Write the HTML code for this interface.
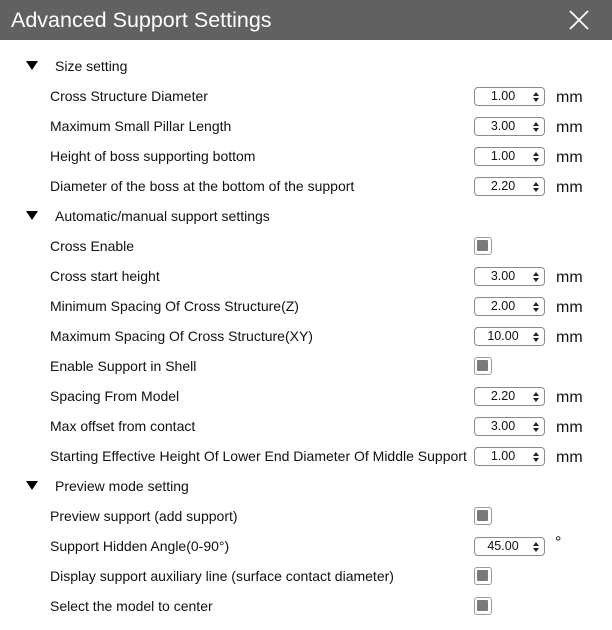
<!DOCTYPE html>
<html><head><meta charset="utf-8"><style>
*{margin:0;padding:0;box-sizing:border-box}
body{width:612px;height:630px;background:#fff;font-family:"Liberation Sans","Noto Sans CJK SC",sans-serif;position:relative;overflow:hidden;color:#111}
.tb{position:absolute;left:0;top:0;width:612px;height:40px;background:#616161;color:#fff;font-size:21.5px;line-height:40px;padding-left:11px}
.x{position:absolute;right:22px;top:9px}
.r{position:absolute;left:0;width:612px;height:30px;font-size:14px;line-height:30px}
.l{position:absolute;left:50px;top:0}
.h .l{left:55px}
.tri{position:absolute;left:26px;top:10px;width:0;height:0;border-left:6px solid transparent;border-right:6px solid transparent;border-top:9px solid #000}
.sp{position:absolute;left:474px;top:6px;width:71px;height:19px;border:1px solid #8a8a8a;border-radius:4px;font-size:12.5px;line-height:17px}
.sp .v{position:absolute;left:0;width:56px;text-align:center}
.sp .a{position:absolute;right:5px;top:4px;width:0;height:0;border-left:3px solid transparent;border-right:3px solid transparent;border-bottom:4px solid #222}
.sp .b{position:absolute;right:5px;top:10px;width:0;height:0;border-left:3px solid transparent;border-right:3px solid transparent;border-top:4px solid #222}
.u{position:absolute;left:556px;top:2px;font-size:16px}
.cb{position:absolute;left:474px;top:6px;width:18px;height:18px;border:1.5px solid #9a9a9a;border-radius:3px}
.cb:after{content:"";position:absolute;left:2px;top:2px;width:11px;height:11px;background:#7a7a7a;border-radius:1px}
</style></head><body>
<div class="tb">Advanced Support Settings<svg class="x" width="22" height="22" viewBox="0 0 22 22"><path d="M2 2L20 20M20 2L2 20" stroke="#fff" stroke-width="1.8"/></svg></div>

<div class="r h" style="top:51px"><div class="tri"></div><span class="l">Size setting</span></div>
<div class="r" style="top:81px"><span class="l">Cross Structure Diameter</span><div class="sp"><span class="v">1.00</span><i class="a"></i><i class="b"></i></div><span class="u">mm</span></div>
<div class="r" style="top:111px"><span class="l">Maximum Small Pillar Length</span><div class="sp"><span class="v">3.00</span><i class="a"></i><i class="b"></i></div><span class="u">mm</span></div>
<div class="r" style="top:141px"><span class="l">Height of boss supporting bottom</span><div class="sp"><span class="v">1.00</span><i class="a"></i><i class="b"></i></div><span class="u">mm</span></div>
<div class="r" style="top:171px"><span class="l">Diameter of the boss at the bottom of the support</span><div class="sp"><span class="v">2.20</span><i class="a"></i><i class="b"></i></div><span class="u">mm</span></div>
<div class="r h" style="top:201px"><div class="tri"></div><span class="l">Automatic/manual support settings</span></div>
<div class="r" style="top:231px"><span class="l">Cross Enable</span><div class="cb"></div></div>
<div class="r" style="top:261px"><span class="l">Cross start height</span><div class="sp"><span class="v">3.00</span><i class="a"></i><i class="b"></i></div><span class="u">mm</span></div>
<div class="r" style="top:291px"><span class="l">Minimum Spacing Of Cross Structure(Z)</span><div class="sp"><span class="v">2.00</span><i class="a"></i><i class="b"></i></div><span class="u">mm</span></div>
<div class="r" style="top:321px"><span class="l">Maximum Spacing Of Cross Structure(XY)</span><div class="sp"><span class="v">10.00</span><i class="a"></i><i class="b"></i></div><span class="u">mm</span></div>
<div class="r" style="top:351px"><span class="l">Enable Support in Shell</span><div class="cb"></div></div>
<div class="r" style="top:381px"><span class="l">Spacing From Model</span><div class="sp"><span class="v">2.20</span><i class="a"></i><i class="b"></i></div><span class="u">mm</span></div>
<div class="r" style="top:411px"><span class="l">Max offset from contact</span><div class="sp"><span class="v">3.00</span><i class="a"></i><i class="b"></i></div><span class="u">mm</span></div>
<div class="r" style="top:441px"><span class="l">Starting Effective Height Of Lower End Diameter Of Middle Support</span><div class="sp"><span class="v">1.00</span><i class="a"></i><i class="b"></i></div><span class="u">mm</span></div>
<div class="r h" style="top:471px"><div class="tri"></div><span class="l">Preview mode setting</span></div>
<div class="r" style="top:501px"><span class="l">Preview support (add support)</span><div class="cb"></div></div>
<div class="r" style="top:531px"><span class="l">Support Hidden Angle(0-90°)</span><div class="sp"><span class="v">45.00</span><i class="a"></i><i class="b"></i></div><span class="u" style="left:555px;top:-3px">°</span></div>
<div class="r" style="top:561px"><span class="l">Display support auxiliary line (surface contact diameter)</span><div class="cb"></div></div>
<div class="r" style="top:591px"><span class="l">Select the model to center</span><div class="cb"></div></div>
</body></html>
